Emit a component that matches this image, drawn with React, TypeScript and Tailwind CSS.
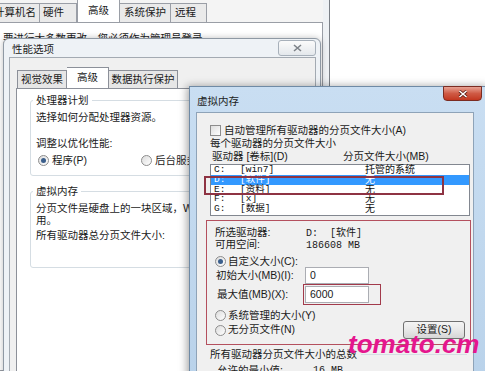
import React from 'react';

const Radio = ({ checked = false }: { checked?: boolean }) => (
  <span className="inline-flex h-[11px] w-[11px] shrink-0 items-center justify-center rounded-full border border-[#8d8d8d] bg-gradient-to-br from-[#dcdcdc] to-white">
    {checked && <span className="h-[5px] w-[5px] rounded-full bg-[#3b5f8c]" />}
  </span>
);

const Checkbox = () => (
  <span className="inline-block h-[11px] w-[11px] shrink-0 border border-[#8d8d8d] bg-gradient-to-br from-[#dedede] to-white" />
);

const drives = [
  { d: 'C:', label: '[win7]', size: '托管的系统', selected: false },
  { d: 'D:', label: '[软件]', size: '无', selected: true },
  { d: 'E:', label: '[资料]', size: '无', selected: false },
  { d: 'F:', label: '[x]', size: '无', selected: false },
  { d: 'G:', label: '[数据]', size: '无', selected: false },
];

const App: React.FC = () => {
  return (
    <div className="relative h-[371px] w-[485px] overflow-hidden bg-white font-['Liberation_Sans','Noto_Sans_CJK_SC',sans-serif] text-[10.5px] text-[#1a1a1a]">
      {/* System properties window (background) */}
      <div className="absolute left-[-10px] top-0 flex h-[371px] w-[340px]">
        <div className="flex w-[333px] flex-col bg-[#f4f4f4]">
          <div className="flex h-[22px] items-end">
            <div className="flex h-[19px] w-[50px] items-center border border-b-0 border-[#9a9ea6] bg-[#eaeaea] pl-[3px]">计算机名</div>
            <div className="flex h-[19px] w-[37px] items-center border border-b-0 border-l-0 border-[#9a9ea6] bg-[#eaeaea] pl-[3px]">硬件</div>
            <div className="z-10 flex h-[23px] w-[43px] items-center justify-center border border-b-0 border-[#9a9ea6] bg-white">高级</div>
            <div className="flex h-[19px] w-[51px] items-center justify-center border border-b-0 border-l-0 border-[#9a9ea6] bg-[#eaeaea]">系统保护</div>
            <div className="flex h-[19px] w-[36px] items-center border border-b-0 border-l-0 border-[#9a9ea6] bg-[#eaeaea] pl-[4px]">远程</div>
          </div>
          <div className="flex-1 border border-[#9a9ea6] bg-white pl-[12px] pt-[9px]">
            <div className="whitespace-nowrap leading-[13px]">要进行大多数更改，您必须作为管理员登录。</div>
          </div>
        </div>
        <div className="w-[7px] border-r border-[#7a7f86] bg-[#eef1f4]" />
      </div>

      {/* Performance options window */}
      <div className="absolute left-[3px] top-[38px] flex h-[345px] w-[318px] flex-col rounded-t-[6px] border border-[#8f99a4] bg-[#eef2f6] shadow-[0_0_6px_rgba(0,0,0,0.25)]">
        <div className="relative h-[18px] pl-[8px] pt-[4px] leading-[13px] text-[#222]">
          性能选项
          <div className="absolute left-[274px] top-[1px] flex h-[16px] w-[38px] items-center justify-center rounded-[3px] border border-[#a7b0ba] bg-gradient-to-b from-[#fbfbfb] to-[#e4e8ec]">
            <svg width="9" height="8" viewBox="0 0 9 8">
              <path d="M1 1 L8 7 M8 1 L1 7" stroke="#7d8288" strokeWidth="1.6" />
            </svg>
          </div>
        </div>
        <div className="ml-[5px] mr-[4px] flex flex-1 flex-col border border-[#a3aab2] bg-[#f0f0f0] pl-[6px] pr-[3px] pt-[9px]">
          <div className="flex h-[21px] items-end pl-[1px]">
            <div className="flex h-[18px] w-[50px] items-center justify-center border border-b-0 border-[#8c9099] bg-[#e6e6e6]">视觉效果</div>
            <div className="z-10 flex h-[21px] w-[42px] items-center justify-center border border-b-0 border-l-0 border-[#8c9099] bg-white">高级</div>
            <div className="flex h-[18px] w-[69px] items-center justify-center border border-b-0 border-l-0 border-[#8c9099] bg-[#e6e6e6]">数据执行保护</div>
          </div>
          <div className="flex-1 border border-[#8c9099] bg-white pl-[13px] pr-[12px] pt-[11px]">
            <div className="relative h-[76px] rounded-[3px] border border-[#d5dde3] pl-[5px] pt-[10px]">
              <span className="absolute left-[2px] top-[-7px] bg-white px-[3px] leading-[13px]">处理器计划</span>
              <div className="leading-[13px]">选择如何分配处理器资源。</div>
              <div className="mt-[13px] leading-[13px]">调整以优化性能:</div>
              <div className="mt-[4px] flex h-[13px] items-center">
                <div className="flex w-[105px] items-center gap-[3px] pl-[2px]">
                  <Radio checked />
                  <span>程序(P)</span>
                </div>
                <div className="flex items-center gap-[3px]">
                  <Radio />
                  <span className="whitespace-nowrap">后台服务(S)</span>
                </div>
              </div>
            </div>
            <div className="relative mt-[15px] h-[77px] rounded-[3px] border border-[#d5dde3] pl-[5px] pt-[10px]">
              <span className="absolute left-[2px] top-[-7px] bg-white px-[3px] leading-[13px]">虚拟内存</span>
              <div className="whitespace-nowrap leading-[12px]">分页文件是硬盘上的一块区域，Windows 当作 RAM 使</div>
              <div className="leading-[12px]">用。</div>
              <div className="mt-[3px] whitespace-nowrap leading-[13px]">所有驱动器总分页文件大小:</div>
            </div>
          </div>
        </div>
        <div className="h-[6px]" />
      </div>

      {/* Virtual memory window */}
      <div className="absolute left-[189px] top-[86px] flex h-[300px] w-[300px] flex-col border border-[#6f8aa5] bg-gradient-to-b from-[#c9def2] to-[#b9d2ea] shadow-[-2px_0_8px_rgba(0,0,0,0.35)]">
        <div className="relative h-[25px] pl-[7px] pt-[8px] leading-[13px] text-[#1c1c1c]">
          虚拟内存
          <div className="absolute left-[253px] top-[-1px] flex h-[15px] w-[39px] items-center justify-center rounded-b-[4px] border border-[#7b2c22] bg-gradient-to-b from-[#e7a193] via-[#cf5a45] to-[#c2361f]">
            <svg width="10" height="8" viewBox="0 0 10 8">
              <path d="M1.5 1 L8.5 7 M8.5 1 L1.5 7" stroke="#5a1a12" strokeWidth="3" />
              <path d="M1.5 1 L8.5 7 M8.5 1 L1.5 7" stroke="#ffffff" strokeWidth="1.6" />
            </svg>
          </div>
        </div>
        <div className="ml-[6px] flex h-[270px] w-[278px] flex-col border border-[#8ea3b8] bg-[#f0f0f0] pl-[13px] pt-[11px]">
          <div className="flex h-[13px] items-center gap-[3px]">
            <Checkbox />
            <span className="whitespace-nowrap">自动管理所有驱动器的分页文件大小(A)</span>
          </div>
          <div className="h-[13px] leading-[13px]">每个驱动器的分页文件大小</div>
          <div className="flex h-[13px] items-center pl-[2px] leading-[13px]">
            <span className="w-[131px]">驱动器 [卷标](D)</span>
            <span>分页文件大小(MB)</span>
          </div>
          <div className="mt-[1px] h-[52px] w-[260px] border border-[#828790] bg-white pt-[0.5px] font-['Liberation_Mono','Noto_Sans_CJK_SC',monospace] text-[9.5px]">
            {drives.map((r) => (
              <div
                key={r.d}
                className={`flex h-[9.7px] items-center leading-[10px] ${r.selected ? 'bg-[#3399ff] text-white' : 'text-[#111]'}`}
              >
                <span className="w-[29px] pl-[3px]">{r.d}</span>
                <span className="w-[125px]">{r.label}</span>
                <span className="font-['Liberation_Sans','Noto_Sans_CJK_SC',sans-serif] text-[10px]">{r.size}</span>
              </div>
            ))}
          </div>

          <div className="ml-[-4px] mt-[4px] flex h-[125px] w-[265px] flex-col border border-[#b4505e] pl-[8px] pt-[6px]">
            <div className="flex h-[12px] items-center">
              <span className="w-[91px]">所选驱动器:</span>
              <span className="font-['Liberation_Mono','Noto_Sans_CJK_SC',monospace] text-[10px]">D:&nbsp;&nbsp;[软件]</span>
            </div>
            <div className="flex h-[12px] items-center">
              <span className="w-[91px]">可用空间:</span>
              <span className="font-['Liberation_Mono',monospace] text-[10px]">186608 MB</span>
            </div>
            <div className="mt-[5px] flex h-[11px] items-center gap-[2px]">
              <Radio checked />
              <span>自定义大小(C):</span>
            </div>
            <div className="flex h-[17px] items-center">
              <span className="w-[90px] pl-[1px]">初始大小(MB)(I):</span>
              <div className="flex h-[17px] w-[64px] items-center border border-[#abadb3] bg-white pl-[4px]">0</div>
            </div>
            <div className="mt-[2px] flex h-[17px] items-center">
              <span className="w-[90px] pl-[2px]">最大值(MB)(X):</span>
              <div className="flex h-[17px] w-[64px] items-center border border-[#abadb3] bg-white pl-[4px]">6000</div>
            </div>
            <div className="mt-[7px] flex h-[11px] items-center gap-[2px]">
              <Radio />
              <span>系统管理的大小(Y)</span>
            </div>
            <div className="flex h-[18px] items-center justify-between pr-[5px]">
              <div className="flex items-center gap-[2px]">
                <Radio />
                <span>无分页文件(N)</span>
              </div>
              <button className="flex h-[18px] w-[62px] items-center justify-center rounded-[3px] border border-[#707070] bg-gradient-to-b from-[#f4f4f4] via-[#e8e8e8] to-[#d6d6d6] text-[10.5px] text-[#1a1a1a]">
                设置(S)
              </button>
            </div>
          </div>

          <div className="mt-[3px] flex h-[13px] items-center">
            <span className="whitespace-nowrap">所有驱动器分页文件大小的总数</span>
            <span className="ml-[4px] mr-[6px] h-px flex-1 bg-[#d5dde3]" />
          </div>
          <div className="mt-[3px] flex h-[13px] items-center pl-[7px]">
            <span className="w-[96px]">允许的最小值:</span>
            <span className="font-['Liberation_Mono',monospace] text-[10px]">16 MB</span>
          </div>
        </div>
      </div>

      {/* Red annotation boxes */}
      <div className="absolute left-[204px] top-[176px] h-[19px] w-[240px] border-2 border-[#8e3343]" />
      <div className="absolute left-[303px] top-[284px] h-[21px] w-[78px] border-[1.5px] border-[#a23a4b]" />

      {/* Watermark */}
      <div className="absolute left-[348px] top-[331px] text-[26px] font-bold italic leading-none text-[#e5168e]">
        tomato.cm
      </div>
    </div>
  );
};

export default App;
